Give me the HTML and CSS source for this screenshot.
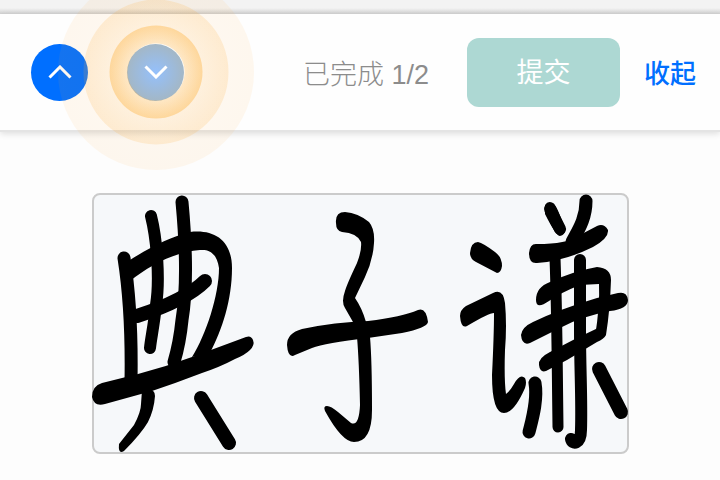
FILE: index.html
```html
<!DOCTYPE html>
<html lang="zh-CN">
<head>
    <meta charset="UTF-8">
    <meta name="viewport" content="width=device-width, initial-scale=1">
    <title>手写签名</title>
    <link rel="stylesheet" href="styles.css">
</head>
<body>
    <div class="top-strip"></div>
    <header class="toolbar">
        <div class="nav-buttons">
            <button type="button" class="nav-btn" aria-label="上一个">
                <svg viewBox="0 0 24 14"><path d="M1.5 12.5L12 2L22.5 12.5"/></svg>
            </button>
            <button type="button" class="nav-btn active" aria-label="下一个">
                <svg viewBox="0 0 24 14"><path d="M1.5 1.5L12 12L22.5 1.5"/></svg>
                <span class="ripple ripple-lg"></span>
                <span class="ripple ripple-md"></span>
                <span class="ripple ripple-sm"></span>
            </button>
        </div>
        <span class="progress">已完成 1/2</span>
        <button type="button" class="submit-btn">提交</button>
        <button type="button" class="collapse-btn">收起</button>
    </header>
    <main class="content">
        <div class="sign-box">
            <!-- pen strokes of the signature -->
            <svg class="ink" viewBox="94 195 533 257" role="img" aria-label="典子谦">
                <g class="pen">
                    <path stroke-width="13" d="M124 258C129 290 132 325 131 382"/>
                    <path stroke-width="12" d="M151 216C157 240 160 280 156 305C154 325 151 338 150 348"/>
                    <path stroke-width="13" d="M182 202C186 245 187 290 182 320C180 340 177 352 174 362"/>
                    <path stroke-width="14" d="M137 316C165 307 190 296 205 281"/>
                    <path stroke-width="14" d="M201 398L229 443"/>
                    <path stroke-width="12" d="M550 209L560 229"/>
                    <path stroke-width="13" d="M586 201C586 220 577 232 572 242"/>
                    <path stroke-width="11" d="M555 258C557 310 557 350 558 427"/>
                    <path stroke-width="12" d="M580 260L580 330C580 370 582 400 581 430C581 445 572 445 571 439"/>
                    <path stroke-width="13" d="M535 383C538 400 532 420 529 432"/>
                    <path stroke-width="14" d="M599 369L621 412"/>
                </g>
                <g class="brush">
                    <path d="M127 262C150 247 170 237 190 232C215 229 232 241 232 268C232 300 222 330 210 353L192 357C206 335 219 295 219 268C217 254 210 249 200 250C175 252 150 265 130 281Z"/>
                    <path d="M92 397Q92 386 102 383L138 374Q165 367 192 357L246 337Q251 335 253 340Q255 345 250 350Q245 355 235 359Q220 367 202 373Q176 383 152 391L105 404Q94 407 92 397Z"/>
                    <path d="M142 390Q155 387 155 396Q154 410 148 422Q141 434 124 451Q118 455 119 444L134 425Q141 412 141 404Z"/>
                    <path d="M545 205Q548 200 553 203Q557 205 565 230Q565 235 560 236Q556 236 545 214Z"/>
                    <path d="M336 223Q335 212 345 212Q358 213 369 222Q375 229 374 243Q373 260 365 277L355 298Q362 308 366 322L353 322L345 308Q341 302 345 291Q347 284 357 263Q362 250 361 242Q357 233 342 232Q336 231 336 223Z"/>
                    <path d="M287 345Q287 333 302 329Q335 322 368 321Q402 317 418 310Q426 307 428 322Q427 328 402 333L368 338Q325 343 312 348L295 355Q288 359 287 345Z"/>
                    <path d="M357 337L370 337Q372 360 372 410Q372 442 354 442Q342 442 325 411Q323 406 327 406Q331 406 338 412L351 423Q359 427 360 405Q359 360 357 337Z"/>
                    <path d="M470 253Q471 242 478 242Q483 243 495 252Q502 257 502 266Q501 273 497 273L476 262Q470 259 470 253Z"/>
                    <path d="M460 316Q460 310 466 306L493 293Q503 288 505 303Q507 325 505 350Q504 380 506 394Q510 391 514 384Q520 373 525 378Q527 382 525 388Q514 413 504 413Q492 413 492 375Q494 335 494 313Q489 313 467 326Q461 329 460 316Z"/>
                    <path d="M529 253Q530 243 537 244Q567 244 578 236L597 226Q604 223 608 230Q609 238 593 247Q565 261 537 263Q529 264 529 253Z"/>
                    <path d="M536 300Q536 287 550 282Q574 271 597 267Q611 268 611 280Q610 310 606 335L595 337Q600 305 599 284L580 285Q560 293 549 301Q536 310 536 300Z"/>
                    <path d="M521 335Q522 327 533 322Q560 309 597 298L618 293Q627 291 628 300Q628 309 610 311Q580 317 562 327L530 343Q522 346 521 335Z"/>
                    <path d="M539 365Q538 358 550 352L575 339L598 328Q605 327 606 335Q604 339 597 342L567 360L546 371Q540 373 539 365Z"/>
                </g>
            </svg>
        </div>
    </main>
</body>
</html>
```

FILE: styles.css
```css
* {
    box-sizing: border-box;
}
body {
    margin: 0;
    background: #fdfdfd;
    font-family: "Noto Sans CJK SC", "Noto Sans", sans-serif;
    overflow-x: hidden;
}
button {
    border: none;
    padding: 0;
    font-family: inherit;
    cursor: pointer;
}
.top-strip {
    height: 14px;
    background: linear-gradient(#f3f3f3 8px, #d0d0d0);
}
.toolbar {
    display: flex;
    align-items: center;
    gap: 24px;
    height: 118px;
    padding: 0 24px 0 31px;
    background: #fefefe;
    border-bottom: 2px solid #e4e4e4;
    box-shadow: 0 2px 6px rgba(0,0,0,0.12);
}
.nav-buttons {
    display: flex;
    gap: 39px;
    margin-right: auto;
}
.nav-btn {
    position: relative;
    display: flex;
    align-items: center;
    justify-content: center;
    width: 57px;
    height: 57px;
    border-radius: 50%;
    background: #006fff;
}
.nav-btn svg {
    width: 24px;
    height: 14px;
    fill: none;
    stroke: #fff;
    stroke-width: 3;
}
.nav-btn.active {
    background: radial-gradient(circle closest-side, #94c0fc, #a3b7c6);
}
.nav-btn.active svg {
    position: relative;
    z-index: 1;
}
/* tap ripple, drawn over the toolbar */
.ripple {
    position: absolute;
    top: 50%;
    left: 50%;
    transform: translate(-50%, -50%);
    border-radius: 50%;
    pointer-events: none;
}
.ripple-lg {
    width: 196px;
    height: 196px;
    background: radial-gradient(circle closest-side, transparent 28px, rgba(255,165,50,0.06) 29px, rgba(255,165,50,0.08));
}
.ripple-md {
    width: 145px;
    height: 145px;
    background: radial-gradient(circle closest-side, transparent 28px, rgba(255,175,50,0.06) 29px, rgba(253,170,50,0.17));
}
.ripple-sm {
    width: 93px;
    height: 93px;
    background: radial-gradient(circle closest-side, transparent 28px, rgba(255,170,40,0.18) 29px, rgba(255,170,40,0.36));
}
.progress {
    margin-right: 14px;
    font-family: "Liberation Sans", "Noto Sans CJK SC", sans-serif;
    font-size: 27px;
    font-weight: 300;
    color: #8c8c8c;
}
.submit-btn {
    width: 153px;
    height: 69px;
    padding-bottom: 4px;
    border-radius: 12px;
    background: #add8d3;
    color: #fff;
    font-size: 27px;
}
.collapse-btn {
    padding-bottom: 2px;
    background: none;
    color: #006fff;
    font-size: 26px;
    font-weight: 500;
}
.content {
    padding: 61px 91px 26px 92px;
}
.sign-box {
    background: #f6f8fa;
    border: 2px solid #cbcbcb;
    border-radius: 8px;
}
.ink {
    display: block;
    width: 100%;
    overflow: visible;
}
.pen {
    fill: none;
    stroke: #000;
    stroke-linecap: round;
}
.brush {
    fill: #000;
}
```
